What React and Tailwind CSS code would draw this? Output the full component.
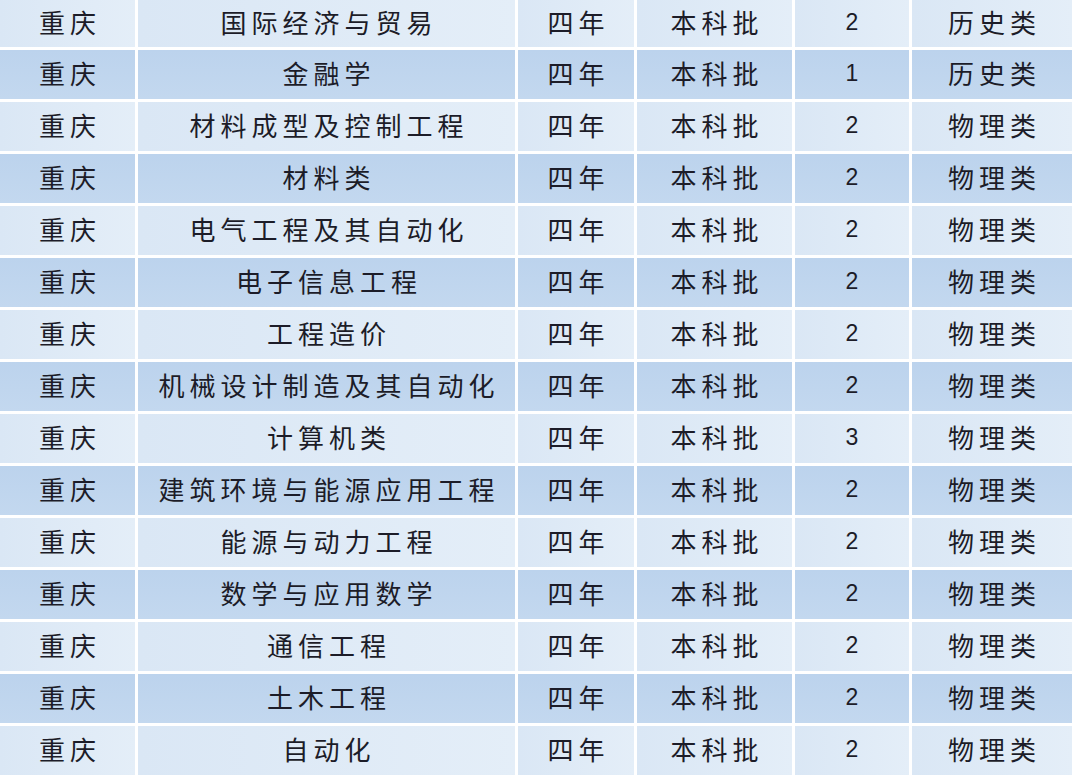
const ROWS = [
  ["重庆", "国际经济与贸易", "四年", "本科批", "2", "历史类"],
  ["重庆", "金融学", "四年", "本科批", "1", "历史类"],
  ["重庆", "材料成型及控制工程", "四年", "本科批", "2", "物理类"],
  ["重庆", "材料类", "四年", "本科批", "2", "物理类"],
  ["重庆", "电气工程及其自动化", "四年", "本科批", "2", "物理类"],
  ["重庆", "电子信息工程", "四年", "本科批", "2", "物理类"],
  ["重庆", "工程造价", "四年", "本科批", "2", "物理类"],
  ["重庆", "机械设计制造及其自动化", "四年", "本科批", "2", "物理类"],
  ["重庆", "计算机类", "四年", "本科批", "3", "物理类"],
  ["重庆", "建筑环境与能源应用工程", "四年", "本科批", "2", "物理类"],
  ["重庆", "能源与动力工程", "四年", "本科批", "2", "物理类"],
  ["重庆", "数学与应用数学", "四年", "本科批", "2", "物理类"],
  ["重庆", "通信工程", "四年", "本科批", "2", "物理类"],
  ["重庆", "土木工程", "四年", "本科批", "2", "物理类"],
  ["重庆", "自动化", "四年", "本科批", "2", "物理类"],
];

const WIDTHS = ["w-[135px]", "w-[377px]", "w-[116px]", "w-[155px]", "w-[114px]", "w-[160px]"];

export default function App() {
  return (
    <div className="w-[1074px] h-[780px] bg-white overflow-hidden flex flex-col gap-[3px] text-[#1c1c28]">
      {ROWS.map((row, i) => {
        const dark = i % 2 === 1;
        return (
          <div key={i} className={`flex gap-[3px] shrink-0 ${i === 0 ? "h-[47px]" : "h-[49px]"}`}>
            {row.map((cell, j) => (
              <div
                key={j}
                className={`${WIDTHS[j]} shrink-0 flex items-center justify-center ${
                  dark
                    ? "bg-gradient-to-b from-[#bcd3ed] to-[#c3d8ef]"
                    : "bg-gradient-to-r from-[#dae7f5] to-[#e4eef8]"
                } ${
                  j === 4
                    ? "font-['Liberation_Sans',sans-serif] text-[23px] pb-[2px]"
                    : "font-['Noto_Sans_CJK_SC',sans-serif] text-[26px] tracking-[5px] pl-[5px] pb-[4px]"
                }`}
              >
                {cell}
              </div>
            ))}
          </div>
        );
      })}
    </div>
  );
}
